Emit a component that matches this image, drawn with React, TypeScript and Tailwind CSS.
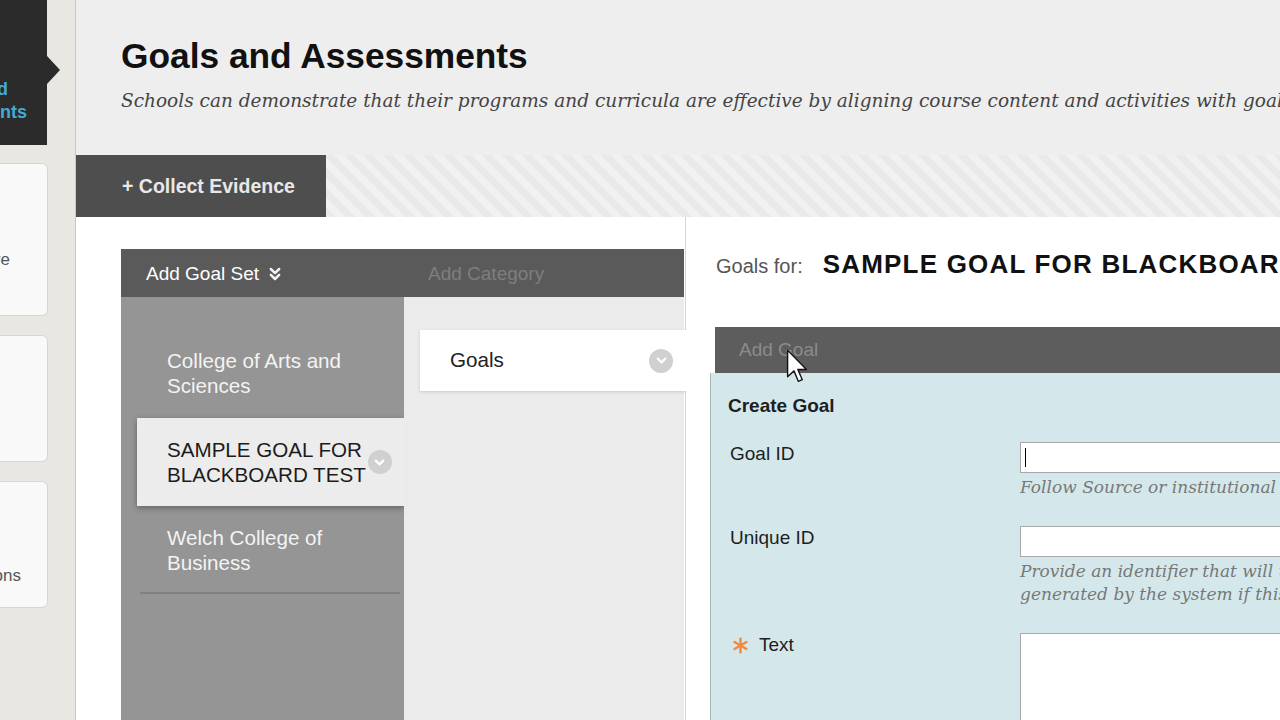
import { ChevronDown, ChevronsDown } from "lucide-react";

function Circle() {
  return (
    <span className="w-[24px] h-[24px] rounded-full bg-[#d0d0d0] flex items-center justify-center shrink-0">
      <ChevronDown size={15} strokeWidth={3.5} color="#ffffff" />
    </span>
  );
}

function Asterisk() {
  return (
    <svg width="17" height="17" viewBox="0 0 16 16" className="shrink-0">
      <g stroke="#f0883a" strokeWidth="2.2" strokeLinecap="round">
        <line x1="8" y1="1.5" x2="8" y2="14.5" />
        <line x1="2.4" y1="4.7" x2="13.6" y2="11.3" />
        <line x1="2.4" y1="11.3" x2="13.6" y2="4.7" />
      </g>
    </svg>
  );
}

function Sidebar() {
  return (
    <aside className="w-[76px] shrink-0 bg-[#e9e7e2] border-r border-[#c8c8c8] flex flex-col relative z-10">
      <div className="relative h-[145px] w-[47px] bg-[#2b2b2b] pt-[78px] text-[18px] leading-[23px] font-bold text-[#45aad3]">
        <div className="flex justify-end pr-[39px] whitespace-nowrap overflow-hidden">
          <span>Goals and</span>
        </div>
        <div className="flex justify-end pr-[20px] whitespace-nowrap overflow-hidden">
          <span>Assessments</span>
        </div>
        <span className="absolute left-full top-[56px] w-0 h-0 border-y-[14px] border-y-transparent border-l-[13px] border-l-[#2b2b2b]" />
      </div>

      <div className="mt-[18px] h-[153px] w-[48px] rounded-r-[6px] bg-[#f9f9f9] border border-l-0 border-[#d6d6d6] pt-[86px] overflow-hidden">
        <div className="flex justify-end pr-[37px] whitespace-nowrap text-[17px] leading-[20px] text-[#555]">
          <span>Archive</span>
        </div>
      </div>
      <div className="mt-[19px] h-[127px] w-[48px] rounded-r-[6px] bg-[#f9f9f9] border border-l-0 border-[#d6d6d6]" />
      <div className="mt-[19px] h-[127px] w-[48px] rounded-r-[6px] bg-[#f9f9f9] border border-l-0 border-[#d6d6d6] pt-[84px] overflow-hidden">
        <div className="flex justify-end pr-[26px] whitespace-nowrap text-[17px] leading-[20px] text-[#555]">
          <span>Integrations</span>
        </div>
      </div>
    </aside>
  );
}

function GoalSetPanel() {
  return (
    <div className="w-[610px] shrink-0 bg-white border-r border-[#d6d6d6] pl-[45px] pt-[32px] flex flex-col">
      <div className="w-[563px] flex flex-col flex-1">
        <div className="h-[48px] shrink-0 bg-[#5a5a5a] flex items-center text-[19px] pt-[2px]">
          <div className="w-[283px] pl-[25px] flex items-center gap-[6px] text-white">
            <span>Add Goal Set</span>
            <ChevronsDown size={20} strokeWidth={3} color="#f2f2f2" />
          </div>
          <div className="pl-[24px] text-[#7e7e7e]">Add Category</div>
        </div>

        <div className="flex flex-1">
          <div className="w-[283px] bg-[#959595] pt-[32px] text-[20.6px] leading-[25px]">
            <div className="py-[19px] pl-[46px] pr-[10px] text-[#f3f3f3]">
              College of Arts and
              <br />
              Sciences
            </div>
            <div className="mt-[1px] ml-[16px] py-[19px] pl-[30px] bg-[#ececec] text-[#1c1c1c] flex items-center shadow-[0_2px_6px_rgba(0,0,0,0.35)]">
              <span className="whitespace-nowrap">
                SAMPLE GOAL FOR
                <br />
                BLACKBOARD TEST
              </span>
              <span className="ml-[2px]">
                <Circle />
              </span>
            </div>
            <div className="py-[19px] pl-[46px] pr-[10px] text-[#f3f3f3]">
              Welch College of
              <br />
              Business
            </div>
            <div className="ml-[19px] mr-[4px] -mt-[2px] border-b-2 border-[#808080]" />
          </div>

          <div className="flex-1 bg-[#ebebeb] pt-[33px]">
            <div className="ml-[16px] -mr-[3px] h-[61px] bg-white pl-[30px] pr-[14px] flex items-center justify-between text-[20.6px] text-[#222] shadow-[0_1px_3px_rgba(0,0,0,0.15)]">
              <span>Goals</span>
              <Circle />
            </div>
          </div>
        </div>
      </div>
    </div>
  );
}

function GoalForm() {
  const hint = "font-['DejaVu_Serif',serif] italic text-[17px] leading-[23px] text-[#787878] whitespace-nowrap mt-[3px]";
  return (
    <div className="flex-1 min-w-0 bg-white pt-[31px] flex flex-col overflow-hidden">
      <div className="shrink-0 pl-[30px] flex items-baseline gap-[20px] whitespace-nowrap leading-[32px]">
        <span className="text-[20px] text-[#555]">Goals for:</span>
        <span className="text-[26px] font-bold tracking-[1.2px] text-[#111]">
          SAMPLE GOAL FOR BLACKBOARD TEST
        </span>
      </div>

      <div className="shrink-0 mt-[45px] ml-[29px] h-[46px] bg-[#5d5d5d] pl-[24px] flex items-center text-[19px] text-[#8b8b8b]">
        Add Goal
      </div>

      <div className="ml-[24px] flex-1 min-h-0 bg-[#d4e8ec] border-l border-[#a9b4b7] pt-[22px] pl-[17px]">
        <div className="text-[19px] leading-[22px] font-bold text-[#1e1e1e]">Create Goal</div>

        <div className="mt-[25px] grid grid-cols-[292px_380px] gap-y-[27px] items-start text-[19px] leading-[22px] text-[#1e1e1e]">
          <div className="pl-[2px] pt-[1px]">Goal ID</div>
          <div>
            <div className="h-[31px] bg-white border border-[#a8a8a8] flex items-center pl-[4px]">
              <span className="w-[1px] h-[19px] bg-black" />
            </div>
            <div className={hint}>Follow Source or institutional guidelines</div>
          </div>

          <div className="pl-[2px] pt-[1px]">Unique ID</div>
          <div>
            <div className="h-[31px] bg-white border border-[#a8a8a8]" />
            <div className={hint}>
              Provide an identifier that will uniquely identify this goal.
              <br />
              generated by the system if this field is left blank.
            </div>
          </div>

          <div className="pl-[4px] pt-[1px] flex items-center gap-[10px]">
            <Asterisk />
            <span>Text</span>
          </div>
          <div className="h-[140px] bg-white border border-[#a8a8a8]" />
        </div>
      </div>
    </div>
  );
}

export default function App() {
  return (
    <div className="w-[1280px] h-[720px] overflow-hidden flex bg-white relative font-['Liberation_Sans',Arial,sans-serif]">
      <Sidebar />

      <main className="flex-1 min-w-0 flex flex-col">
        <header className="h-[155px] shrink-0 bg-[#eeeeee] pl-[45px] pt-[35px] whitespace-nowrap overflow-hidden">
          <h1 className="text-[35.3px] leading-[41px] font-bold text-[#111]">Goals and Assessments</h1>
          <p className="mt-[13px] font-['DejaVu_Serif',serif] italic text-[18.5px] leading-[24px] text-[#444]">
            Schools can demonstrate that their programs and curricula are effective by aligning course content and activities with goals.
          </p>
        </header>

        <div className="h-[62px] shrink-0 flex">
          <button className="w-[250px] bg-[#4e4e4e] pl-[46px] pt-[2px] text-left text-[19.5px] font-bold text-[#e8e8e8]">
            + Collect Evidence
          </button>
          <div className="flex-1 bg-[repeating-linear-gradient(45deg,#e9e9e9_0px,#e9e9e9_7px,#f1f1f1_7px,#f1f1f1_14px)]" />
        </div>

        <div className="flex flex-1 min-h-0">
          <GoalSetPanel />
          <GoalForm />
        </div>
      </main>

      <svg
        className="absolute left-[786px] top-[349px] pointer-events-none"
        width="24"
        height="36"
        viewBox="0 0 17 26"
      >
        <path
          d="M1 1 L1 20 L5.6 15.8 L8.8 23.4 L11.6 22.2 L8.4 14.8 L14.6 14.8 Z"
          fill="#ffffff"
          stroke="#111111"
          strokeWidth="1"
          strokeLinejoin="round"
        />
      </svg>
    </div>
  );
}
